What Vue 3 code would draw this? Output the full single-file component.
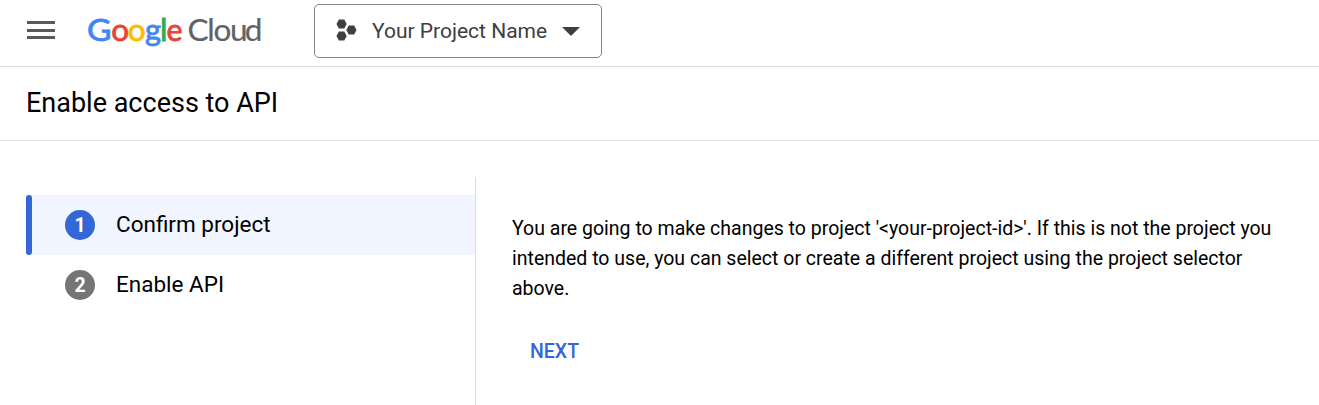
<script setup>
const steps = [
  { number: 1, label: 'Confirm project', active: true },
  { number: 2, label: 'Enable API', active: false },
]
</script>

<template>
  <div class="page">
    <header class="topbar">
      <button class="menu" aria-label="Menu"><i></i><i></i><i></i></button>
      <svg class="logo" width="180" height="44" viewBox="0 0 180 44" aria-label="Google Cloud">
        <g class="brand">
          <text x="1.9" y="34.8" fill="#4285f4" stroke="#4285f4" textLength="24.5" lengthAdjust="spacingAndGlyphs">G</text>
          <text x="26.3" y="34.8" fill="#ea4335" stroke="#ea4335">o</text>
          <text x="42.8" y="34.8" fill="#fbbc05" stroke="#fbbc05">o</text>
          <text x="60" y="34.8" fill="#4285f4" stroke="#4285f4" textLength="16" lengthAdjust="spacingAndGlyphs">g</text>
          <text x="75" y="34.8" fill="#34a853" stroke="#34a853">l</text>
          <text x="81.4" y="34.8" fill="#ea4335" stroke="#ea4335" textLength="16" lengthAdjust="spacingAndGlyphs">e</text>
        </g>
        <text class="cloud" x="102.5 122.3 128.4 145 159.8" y="34.8">Cloud</text>
      </svg>
      <button class="selector">
        <svg width="22" height="24" viewBox="0 0 22 24" fill="#3c4043">
          <path d="M2.9 0.500h5.400l2.400 4.500-2.400 4.500H2.900L.5 5z" />
          <path d="M2.900 12.500h5.400l2.400 4.500-2.400 4.500H2.900L.5 17z" />
          <path d="M12.700 6.500h5.400l2.400 4.500-2.400 4.500h-5.400l-2.400-4.500z" />
        </svg>
        <span class="name">Your Project Name</span>
        <svg class="arrow" width="18" height="9" viewBox="0 0 18 9"><path d="M0 0h18L9 9z" fill="#3c4043" /></svg>
      </button>
    </header>

    <div class="titlebar"><h1>Enable access to API</h1></div>

    <main>
      <nav>
        <div v-for="step in steps" :key="step.number" class="step" :class="{ active: step.active }">
          <span class="badge">{{ step.number }}</span>
          <span class="label">{{ step.label }}</span>
        </div>
      </nav>
      <section>
        <p>You are going to make changes to project '&lt;your-project-id&gt;'. If this is not the project you<br>intended to use, you can select or create a different project using the project selector<br>above.</p>
        <button class="next">NEXT</button>
      </section>
    </main>
  </div>
</template>

<style>
body { background: #fff; overflow: hidden; }
</style>

<style scoped>
* { box-sizing: border-box; }
.page { height: 405px; display: flex; flex-direction: column; font-family: Roboto, "Liberation Sans", sans-serif; color: #000; }
button { border: 0; background: none; padding: 0; font-family: inherit; display: block; }
.topbar { height: 67px; flex: none; display: flex; align-items: flex-start; border-bottom: 1px solid #dadce0; }
.menu { width: 28px; margin: 21px 0 0 27px; display: flex; flex-direction: column; gap: 4.5px; }
.menu i { display: block; height: 3px; background: #5a5a5a; }
.logo { margin: 6px 0 0 30px; overflow: visible; font-family: Lato, sans-serif; font-size: 31.5px; }
.brand text { stroke-width: .8px; }
.cloud { fill: #5f6368; stroke: #5f6368; stroke-width: .2px; }
.selector { width: 288px; height: 54px; margin: 4px 0 0 49px; padding-left: 21px; border: 1px solid #80868b; border-radius: 5px; display: flex; align-items: center; }
.selector svg { flex: none; }
.name { width: 175px; margin-left: 14px; font-size: 21px; line-height: 30px; color: #3c4043; text-align: left; white-space: nowrap; }
.arrow { margin-left: 15px; }
.titlebar { height: 74px; flex: none; padding: 18px 0 0 26px; border-bottom: 1px solid #e0e0e0; }
h1 { margin: 0; font-size: 27px; line-height: 36px; font-weight: 400; }
main { flex: 1; display: flex; padding-top: 36px; }
nav { width: 476px; padding: 18px 0 0 26px; border-right: 1px solid #dadce0; }
.step { height: 60px; display: flex; align-items: center; border-left: 6px solid transparent; padding-left: 33px; position: relative; }
.active { background: #f0f5ff; border-radius: 3px 0 0 3px; }
.active::before { content: ""; position: absolute; left: -6px; top: 0; width: 6px; height: 60px; border-radius: 3px; background: #3367d6; }
.badge { width: 30px; height: 30px; border-radius: 50%; background: #757575; color: #fff; font-size: 19.5px; font-weight: 700; line-height: 31px; text-align: center; }
.active .badge { background: #3367d6; }
.label { margin: 0 0 2px 21px; font-size: 22.5px; line-height: 30px; }
section { padding: 37px 0 0 36px; }
p { margin: 0; font-size: 19.5px; line-height: 30px; white-space: nowrap; }
.next { margin: 33px 0 0 18px; font-size: 19.5px; font-weight: 500; line-height: 30px; color: #3367d6; }
</style>
